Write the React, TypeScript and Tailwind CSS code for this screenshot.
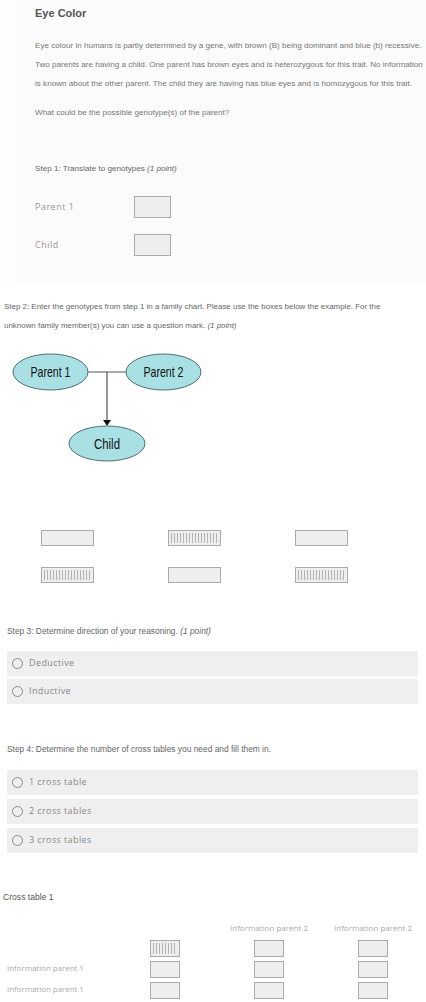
import React from 'react';

const arial = { fontFamily: '"Liberation Sans", Arial, sans-serif' };
const round = { fontFamily: '"Open Sans", "Noto Sans", sans-serif' };

const Box: React.FC<{ striped?: boolean; className: string }> = ({ striped, className }) => (
  <div className={`flex border border-[#aaa] bg-[#eeeeee] ${className}`}>
    {striped && (
      <div className="m-[2px] flex-1 bg-[repeating-linear-gradient(90deg,#b4b4b4_0_1px,#eeeeee_1px_3px)]" />
    )}
  </div>
);

const Radio: React.FC<{ label: string }> = ({ label }) => (
  <div className="flex h-[25px] items-center gap-[6px] bg-[#efefef] pl-[5px]">
    <span className="h-[11px] w-[11px] rounded-full border border-[#888]" />
    <span className="text-[9px] tracking-[0.4px] text-[#8a8a8a]" style={round}>
      {label}
    </span>
  </div>
);

const FamilyChart: React.FC = () => (
  <svg width="196" height="116" viewBox="0 0 196 116" className="ml-[10px] mt-[16px] block bg-white">
    <line x1="77" y1="21" x2="116" y2="21" stroke="#555" strokeWidth="1" />
    <line x1="97" y1="21" x2="97" y2="70" stroke="#333" strokeWidth="1" />
    <polygon points="93,69 101,69 97,75" fill="#111" />
    <ellipse cx="40.5" cy="21" rx="37.5" ry="18" fill="#a9e0e4" stroke="#4f6f73" strokeWidth="1" />
    <ellipse cx="153.5" cy="21" rx="37.5" ry="18" fill="#a9e0e4" stroke="#4f6f73" strokeWidth="1" />
    <ellipse cx="97" cy="92.5" rx="38" ry="17.5" fill="#a9e0e4" stroke="#4f6f73" strokeWidth="1" />
    <g fontFamily='"Liberation Sans", Arial, sans-serif' fontSize="14.5" fill="#111" textAnchor="middle">
      <text x="40.5" y="26" textLength="40" lengthAdjust="spacingAndGlyphs">Parent 1</text>
      <text x="153.5" y="26" textLength="40" lengthAdjust="spacingAndGlyphs">Parent 2</text>
      <text x="97" y="97.5" textLength="26" lengthAdjust="spacingAndGlyphs">Child</text>
    </g>
  </svg>
);

const App: React.FC = () => {
  return (
    <div className="min-h-screen w-[426px] bg-white pb-[4px]">
      {/* Question panel */}
      <div className="bg-[#fdfdfd] pl-[22px]">
        <div className="h-[283px] bg-[#fbfbfb] pl-[13px] pt-[6px]">
          <h1 className="text-[11px] font-bold leading-[14px] text-[#555]" style={arial}>
            Eye Color
          </h1>
          <p className="mt-[15.5px] whitespace-nowrap text-[8.1px] leading-[19px] text-[#777]" style={arial}>
            Eye colour in humans is partly determined by a gene, with brown (B) being dominant and blue (b) recessive.
            <br />
            Two parents are having a child. One parent has brown eyes and is heterozygous for this trait. No information
            <br />
            is known about the other parent. The child they are having has blue eyes and is homozygous for this trait.
          </p>
          <p className="mt-[10px] text-[8.1px] leading-[19px] text-[#777]" style={arial}>
            What could be the possible genotype(s) of the parent?
          </p>

          <p className="mt-[40px] text-[8.1px] leading-[14px] text-[#666]" style={arial}>
            Step 1: Translate to genotypes <i>(1 point)</i>
          </p>
          <div className="mt-[20px] flex h-[22px] items-center">
            <span className="w-[99px] text-[9px] tracking-[0.5px] text-[#999]" style={round}>Parent 1</span>
            <Box className="h-[22px] w-[37px]" />
          </div>
          <div className="mt-[16px] flex h-[22px] items-center">
            <span className="w-[99px] text-[9px] tracking-[0.5px] text-[#999]" style={round}>Child</span>
            <Box className="h-[22px] w-[37px]" />
          </div>
        </div>
      </div>

      {/* Step 2 */}
      <p className="mt-[13.5px] whitespace-nowrap pl-[4px] text-[7.95px] leading-[19px] text-[#666]" style={arial}>
        Step 2: Enter the genotypes from step 1 in a family chart. Please use the boxes below the example. For the
        <br />
        unknown family member(s) you can use a question mark. <i>(1 point)</i>
      </p>
      <FamilyChart />

      <div className="mt-[63px] flex gap-[74px] pl-[41px]">
        <Box className="h-[16px] w-[53px]" />
        <Box striped className="h-[16px] w-[53px]" />
        <Box className="h-[16px] w-[53px]" />
      </div>
      <div className="mt-[21px] flex gap-[74px] pl-[41px]">
        <Box striped className="h-[16px] w-[53px]" />
        <Box className="h-[16px] w-[53px]" />
        <Box striped className="h-[16px] w-[53px]" />
      </div>

      {/* Step 3 */}
      <div className="px-[7px] pr-[8px]">
        <p className="mt-[41px] text-[8.4px] leading-[14px] text-[#666]" style={arial}>
          Step 3: Determine direction of your reasoning. <i>(1 point)</i>
        </p>
        <div className="mt-[13px] flex flex-col gap-[3px]">
          <Radio label="Deductive" />
          <Radio label="Inductive" />
        </div>

        {/* Step 4 */}
        <p className="mt-[38px] text-[8.4px] leading-[14px] text-[#666]" style={arial}>
          Step 4: Determine the number of cross tables you need and fill them in.
        </p>
        <div className="mt-[14px] flex flex-col gap-[4px]">
          <Radio label="1 cross table" />
          <Radio label="2 cross tables" />
          <Radio label="3 cross tables" />
        </div>
      </div>

      {/* Cross table */}
      <p className="mt-[37px] pl-[3px] text-[8.6px] leading-[14px] text-[#555]" style={arial}>
        Cross table 1
      </p>
      <div className="mt-[18px] grid grid-cols-[113px_104px_104px_104px] text-[8px] text-[#aaa]" style={round}>
        <span />
        <span />
        <span className="text-center leading-[12px]">Information parent 2</span>
        <span className="text-center leading-[12px]">Information parent 2</span>
      </div>
      <div className="mt-[6px] flex flex-col gap-[4px]">
        {[0, 1, 2].map((r) => (
          <div key={r} className="grid h-[17px] grid-cols-[113px_104px_104px_104px] items-center">
            <span className="pl-[7px] text-[7.9px] text-[#aaa]" style={round}>
              {r > 0 ? 'Information parent 1' : ''}
            </span>
            <div className="flex justify-center">
              <Box striped={r === 0} className="h-[17px] w-[30px]" />
            </div>
            <div className="flex justify-center">
              <Box className="h-[17px] w-[30px]" />
            </div>
            <div className="flex justify-center">
              <Box className="h-[17px] w-[30px]" />
            </div>
          </div>
        ))}
      </div>
    </div>
  );
};

export default App;
